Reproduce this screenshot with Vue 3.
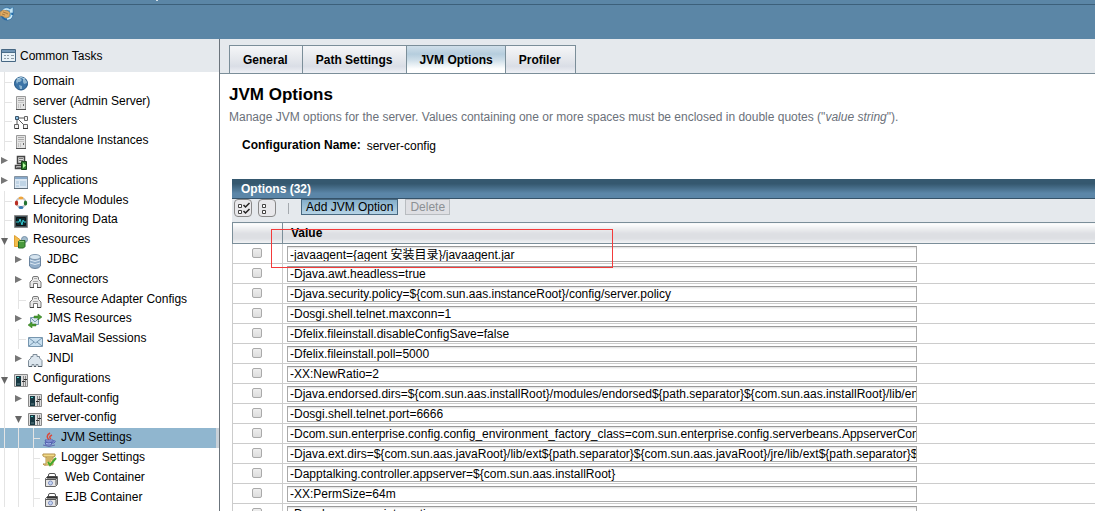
<script setup>
import { ref } from 'vue'

const tasks = [
  { label: 'Domain', icon: 'globe', level: 1, line: true },
  { label: 'server (Admin Server)', icon: 'server', level: 1, line: true },
  { label: 'Clusters', icon: 'cluster', level: 1, line: true },
  { label: 'Standalone Instances', icon: 'server', level: 1, line: true },
  { label: 'Nodes', icon: 'node', level: 1, arrow: 'closed' },
  { label: 'Applications', icon: 'apps', level: 1, arrow: 'closed' },
  { label: 'Lifecycle Modules', icon: 'lifecycle', level: 1, line: true },
  { label: 'Monitoring Data', icon: 'monitor', level: 1, line: true },
  { label: 'Resources', icon: 'resources', level: 1, arrow: 'open' },
  { label: 'JDBC', icon: 'database', level: 2, arrow: 'closed' },
  { label: 'Connectors', icon: 'connector', level: 2, arrow: 'closed' },
  { label: 'Resource Adapter Configs', icon: 'connector', level: 2, line: true },
  { label: 'JMS Resources', icon: 'jms', level: 2, arrow: 'closed' },
  { label: 'JavaMail Sessions', icon: 'mail', level: 2, line: true },
  { label: 'JNDI', icon: 'jndi', level: 2, arrow: 'closed' },
  { label: 'Configurations', icon: 'config', level: 1, arrow: 'open' },
  { label: 'default-config', icon: 'config', level: 2, arrow: 'closed' },
  { label: 'server-config', icon: 'config', level: 2, arrow: 'open' },
  { label: 'JVM Settings', icon: 'java', level: 3, line: true, selected: true },
  { label: 'Logger Settings', icon: 'logger', level: 3, line: true },
  { label: 'Web Container', icon: 'container', level: 3, line: true, wide: true },
  { label: 'EJB Container', icon: 'container', level: 3, line: true, wide: true },
]

const tabs = ['General', 'Path Settings', 'JVM Options', 'Profiler']
const activeTab = ref('JVM Options')

const options = ref([
  '-javaagent={agent 安装目录}/javaagent.jar',
  '-Djava.awt.headless=true',
  '-Djava.security.policy=${com.sun.aas.instanceRoot}/config/server.policy',
  '-Dosgi.shell.telnet.maxconn=1',
  '-Dfelix.fileinstall.disableConfigSave=false',
  '-Dfelix.fileinstall.poll=5000',
  '-XX:NewRatio=2',
  '-Djava.endorsed.dirs=${com.sun.aas.installRoot}/modules/endorsed${path.separator}${com.sun.aas.installRoot}/lib/endorsed',
  '-Dosgi.shell.telnet.port=6666',
  '-Dcom.sun.enterprise.config.config_environment_factory_class=com.sun.enterprise.config.serverbeans.AppserverConfigEnvironmentFactory',
  '-Djava.ext.dirs=${com.sun.aas.javaRoot}/lib/ext${path.separator}${com.sun.aas.javaRoot}/jre/lib/ext${path.separator}${com.sun.aas.instanceRoot}/lib/ext',
  '-Dapptalking.controller.appserver=${com.sun.aas.installRoot}',
  '-XX:PermSize=64m',
  '-Dgosh.args=--nointeractive',
])
</script>

<template>
  <div class="page">
    <header class="masthead">
      <div class="strip"><span class="mark"></span></div>
      <svg class="status" viewBox="0 0 14 14" aria-hidden="true">
        <circle cx="7" cy="7" r="5.500" fill="#6db4dd" stroke="#2468a6" stroke-width="2" />
        <path d="M2 3Q6-1 10 2L13 0V6H8L10 4Q6 2 3 5Z" fill="#c5e6f6" stroke="#2670ad" stroke-width=".5" />
        <path d="M0 5L3 3 8 4 10 6 9 10 6 11 2 9 0 9Z" fill="#dca963" stroke="#a4763d" stroke-width=".5" />
        <path d="M3 5L6 6 8 7M2 7L5 8" stroke="#8f6431" stroke-width=".7" fill="none" />
        <path d="M7 12Q11 12 12 8" stroke="#d1edf8" stroke-width="1.500" fill="none" />
      </svg>
    </header>

    <div class="body">
      <nav class="sidebar" aria-label="Common Tasks">
        <a class="common" href="#common">
          <svg viewBox="0 0 15 14" class="common-icon" aria-hidden="true">
            <path d="M.5.5h14v12H.5z" fill="#e8f2f7" stroke="#466783" />
            <path d="M1 1h13v3H1z" fill="#7095b5" />
            <path d="M1 3.500h13" stroke="#496d8a" />
            <path d="M3 6.500h2m1 0h2m2 0h3M3 9.500h2m1 0h2m2 0h3" stroke="#8c9aa5" />
          </svg>
          Common Tasks
        </a>
        <ul class="tree">
          <li
            v-for="(task, index) in tasks"
            :key="index"
            :class="['node', 'level-' + task.level, task.arrow, { selected: task.selected, line: task.line, wide: task.wide }]"
          >
            <span class="indent"></span>
            <span class="toggle">
              <svg v-if="task.arrow === 'closed'" viewBox="0 0 14 20" aria-hidden="true"><path d="M1 6V13L8 9.500Z" fill="#777" /></svg>
              <svg v-else-if="task.arrow === 'open'" viewBox="0 0 14 20" aria-hidden="true"><path d="M1 8H8L4.500 15Z" fill="#666" /></svg>
            </span>
            <a :href="'#' + task.icon">
              <svg class="icon" viewBox="0 0 15 15" aria-hidden="true">
                <g v-if="task.icon === 'globe'">
                  <circle cx="7" cy="7.500" r="6.500" fill="#3c74a7" stroke="#1e5383" />
                  <path d="M2 5Q3 2 6 2L8 4 6 6 4 6 3 8ZM9 2Q13 4 13 7L10 8 9 6ZM5 9L8 10 8 13 6 13Z" fill="#8fb6d1" />
                  <path d="M3 3Q7 0 11 3" stroke="#b8d8ea" fill="none" />
                </g>
                <g v-else-if="task.icon === 'server'">
                  <path d="M2.500.5h9v13h-9z" fill="#e4e4e4" stroke="#999" />
                  <path d="M4 2.500h6M4 4.500h6" stroke="#aaa" />
                  <path d="M4 6.500h6" stroke="#c6c6c6" />
                  <path d="M4.500 8v4M6.500 8v4" stroke="#c3c3c3" />
                  <path d="M9 8h1v2H9z" fill="#666" />
                  <path d="M2 13.500h10" stroke="#555" />
                </g>
                <g v-else-if="task.icon === 'cluster'">
                  <path d="M4 3h7M3 4v7M4 4l7 7" stroke="#555" />
                  <path d="M1.500 1.500h3v3h-3z" fill="#8cc0e4" stroke="#3c566b" />
                  <path d="M10.500 1.500h3v4h-3zM.5 9.500h4v4h-4zM9.500 9.500h4v4h-4z" fill="#f3f3f3" stroke="#666" />
                  <path d="M1 13.500h4M9 13.500h5" stroke="#333" />
                </g>
                <g v-else-if="task.icon === 'node'">
                  <path d="M3.500 1.500h7v7h-7zM1.500 10.500h8v3h-8z" fill="#ddd" stroke="#444" stroke-width="1.500" />
                  <path d="M5 3.500h4M5 5.500h4M3 12.500h5" stroke="#777" />
                  <path d="M7.500 6.500h5v8h-5z" fill="#2e7b2e" stroke="#173f17" />
                  <path d="M9 8v5l3-2.500Z" fill="#b9ffa2" />
                </g>
                <g v-else-if="task.icon === 'apps'">
                  <path d="M.5 1.500h13v12H.5z" fill="#dbe7f2" stroke="#8593a0" />
                  <path d="M1 2h12v2H1z" fill="#87a8c8" />
                  <path d="M2 6h3v3H2zm4 0h6v5H6zM2 10h3v2H2z" fill="#c0d4e5" />
                  <path d="M0 13.500h14" stroke="#5e6c79" />
                </g>
                <g v-else-if="task.icon === 'lifecycle'">
                  <circle cx="7" cy="7.500" r="4.500" fill="none" stroke="#c4c4c4" stroke-width="2" />
                  <ellipse cx="7" cy="3" rx="2.500" ry="1.500" fill="#efa43c" />
                  <ellipse cx="2.500" cy="8" rx="1.700" ry="2.500" fill="#b92d22" />
                  <ellipse cx="11.500" cy="8" rx="1.700" ry="2.500" fill="#237330" />
                  <ellipse cx="7" cy="12.500" rx="2.500" ry="1.500" fill="#3979b3" />
                </g>
                <g v-else-if="task.icon === 'monitor'">
                  <path d="M.5 1.500h13v12H.5z" fill="#44545a" stroke="#8b8b8b" />
                  <path d="M2.500 3.500h9v8h-9z" fill="#092a31" stroke="#111" />
                  <path d="M2 8h3l1-3 2 6 1-5 1 2h2" fill="none" stroke="#36c8ce" />
                </g>
                <g v-else-if="task.icon === 'resources'">
                  <path d="M.5 1.500L6.500 6V12.500H.5Z" fill="#f3bd4c" stroke="#dfa135" />
                  <circle cx="10.500" cy="5.500" r="3" fill="#a3bccd" stroke="#7691a9" />
                  <path d="M4.500 7.500L6 6.500h5v6l-1.500 1.500h-5z" fill="#4a9a3d" stroke="#286a29" />
                  <path d="M5 7.500h5" stroke="#8fcc78" />
                </g>
                <g v-else-if="task.icon === 'database'">
                  <path d="M1.500 3v9Q3 14.500 7 14.500T12.500 12V3" fill="#91adc9" stroke="#69839e" />
                  <ellipse cx="7" cy="3" rx="5.500" ry="2.500" fill="#d7e5f0" stroke="#849bb1" />
                  <path d="M2 6Q7 9 12 6M2 9Q7 12 12 9" fill="none" stroke="#dce8f3" />
                </g>
                <g v-else-if="task.icon === 'connector'">
                  <path d="M4.500 5.500V4Q4.500 2.500 6 2.500H9Q10.500 2.500 10.500 4V5.500L13 8V13.500H9.500V9.500H5.500V13.500H2V8Z" fill="#e8e8e8" stroke="#777" />
                  <path d="M6 4.500h3M5 7.500h5" stroke="#aaa" />
                  <path d="M2 13.500h4M9 13.500h4" stroke="#444" />
                </g>
                <g v-else-if="task.icon === 'jms'">
                  <path d="M2.500 4.500h8v7h-8z" fill="#d7e5ef" stroke="#7b9bb3" />
                  <path d="M3 5l4 4 4-4" fill="none" stroke="#7b9bb3" />
                  <path d="M6 3h4V1l4 3-4 3V5H6zM8 11H4V9l-4 3 4 3v-2h4z" fill="#4a9a32" stroke="#327821" stroke-width=".5" />
                </g>
                <g v-else-if="task.icon === 'mail'">
                  <path d="M.5 4.500h14v9H.5z" fill="#c8dfef" stroke="#7796af" />
                  <path d="M1 5l6.500 5L14 5M1 13l5-4m8 4L9 9" fill="none" stroke="#7796af" />
                </g>
                <g v-else-if="task.icon === 'jndi'">
                  <path d="M.5 13.500V7.500L3 5V3.500H5V1.500H9V3.500H11.500V5L14 7.500V13.500H10V11.500H8V13.500H6V11.500H4V13.500Z" fill="#dce6ee" stroke="#7f8d99" />
                  <path d="M1 13.500h3m2 0h2m2 0h4" stroke="#505c66" />
                </g>
                <g v-else-if="task.icon === 'config'">
                  <path d="M.5 1.500h13v12H.5z" fill="#ddd" stroke="#888" />
                  <path d="M2 3h5v10H2z" fill="#173842" />
                  <path d="M3 4h2v1H3z" fill="#54d0c8" />
                  <path d="M3 11h3" stroke="#67848b" />
                  <path d="M9.500 3v10M11.500 3v10" stroke="#888" />
                  <path d="M8 8.500h3M10 6.500h3" stroke="#333" />
                </g>
                <g v-else-if="task.icon === 'java'">
                  <path d="M8 1Q3 4 7 8M10 3Q6 5 9 7" stroke="#db4939" stroke-width="1.500" fill="none" />
                  <path d="M3 8h8v2H4zM3 10Q7 12 10 10L9 13H4ZM11 9q4-1 1 2h-2" fill="#a9b7ee" stroke="#5261ae" />
                  <path d="M1 13Q7 16 13 13" stroke="#6069b0" fill="none" />
                </g>
                <g v-else-if="task.icon === 'logger'">
                  <path d="M1 2Q0 5 4 5V12H1Q2 14 5 13H11V5Q14 5 13 2Z" fill="#f2da87" stroke="#b2904a" />
                  <path d="M4 5h7M5 7h5M5 9h4" stroke="#ad8c45" />
                  <path d="M6 10l2 3 6-7" fill="none" stroke="#44a72d" stroke-width="2" />
                </g>
                <g v-else>
                  <path d="M4.500 4V3Q4.500 1.500 6 1.500H10Q11.500 1.500 11.500 3V4" fill="none" stroke="#555" />
                  <path d="M1.500 6.500L3.500 4.500H13.500V12.500L11.500 14.500H1.500Z" fill="#e5e5e5" stroke="#666" />
                  <path d="M2 7.500h10v6M12 7l1-2" fill="none" stroke="#555" />
                  <path d="M3 5.500h10" stroke="#333" stroke-width="2" />
                  <circle cx="6.500" cy="11" r="2" fill="#c6d7f5" stroke="#8290c0" />
                </g>
              </svg>
              {{ task.label }}
            </a>
          </li>
        </ul>
      </nav>

      <main class="content">
        <div class="tabs" role="tablist">
          <button
            v-for="tab in tabs"
            :key="tab"
            type="button"
            role="tab"
            :aria-selected="tab === activeTab"
            :class="['tab', { active: tab === activeTab }]"
            @click="activeTab = tab"
          >{{ tab }}</button>
        </div>

        <h1>JVM Options</h1>
        <p class="help">Manage JVM options for the server. Values containing one or more spaces must be enclosed in double quotes ("<em>value string</em>").</p>
        <dl class="property"><dt>Configuration Name:</dt><dd>server-config</dd></dl>

        <section class="options">
          <h2>Options (32)</h2>
          <div class="actions">
            <button class="select-button" type="button" aria-label="Select all">
              <svg viewBox="0 0 16 16" aria-hidden="true">
                <path d="M3.500 4.500h3v3h-3zM3.500 10.500h3v3h-3z" fill="#fff" stroke="#444" />
                <path d="M8.500 5l2 2 4-4M8.500 11l2 2 4-4" fill="none" stroke="#222" stroke-width="1.500" />
              </svg>
            </button>
            <button class="select-button" type="button" aria-label="Deselect all">
              <svg viewBox="0 0 16 16" aria-hidden="true"><path d="M3.500 4.500h3v3h-3zM3.500 10.500h3v3h-3z" fill="#fff" stroke="#444" /></svg>
            </button>
            <span class="divider"></span>
            <button class="action primary" type="button">Add JVM Option</button>
            <button class="action" type="button" disabled>Delete</button>
          </div>
          <table>
            <thead><tr><th class="check"></th><th>Value</th></tr></thead>
            <tbody>
              <tr v-for="(option, index) in options" :key="index">
                <td class="check"><input type="checkbox" :aria-label="'Select option ' + (index + 1)" /></td>
                <td><input v-model="options[index]" class="value" type="text" :aria-label="'Value ' + (index + 1)" /></td>
              </tr>
            </tbody>
          </table>
          <div class="highlight"></div>
        </section>
      </main>
    </div>
  </div>
</template>

<style>
html, body { background: #fff; }
body { overflow: hidden; }
</style>

<style scoped>
* { box-sizing: border-box; }
.page {
  height: 100vh;
  display: flex;
  flex-direction: column;
  overflow: hidden;
  font: 12px/16px "Liberation Sans", Arial, "Noto Sans CJK SC", sans-serif;
  color: #000;
}
button, input { font: inherit; color: inherit; margin: 0; }
a { color: inherit; text-decoration: none; }
.masthead { flex: none; height: 39px; background: #5b86a6; }
.strip { height: 5px; padding-left: 156px; border-bottom: 1px solid #3c607a; }
.mark { display: block; width: 2px; height: 1px; background: #d5e1e9; }
.status { display: block; width: 14px; height: 14px; margin-top: 2px; }
.body { flex: 1; min-height: 0; display: flex; }
.sidebar { flex: none; width: 220px; border-right: 1px solid #6b747c; overflow: hidden; }
.common { display: flex; align-items: center; gap: 4px; height: 33px; padding-left: 1px; background: #e5e9ed; }
.common-icon { width: 15px; height: 14px; }
.tree { list-style: none; margin: 0; padding: 0; }
.node {
  display: flex;
  height: 20px;
  background: linear-gradient(#e4e4e4, #e4e4e4) 4px 0 / 1px 100% no-repeat;
}
.node:nth-child(5n + 2) { height: 19px; }
.level-1.closed { background: none; }
.level-2.line, .level-3 { background: linear-gradient(#e4e4e4, #e4e4e4) 4px 0 / 1px 100% no-repeat, linear-gradient(#e4e4e4, #e4e4e4) 18px 0 / 1px 100% no-repeat; }
.indent { flex: none; width: 0; }
.level-2 .indent { width: 14px; }
.level-3 .indent { width: 28px; }
.toggle { flex: none; width: 14px; }
.toggle svg { display: block; width: 14px; height: 20px; }
.level-3 .toggle { background: linear-gradient(#e4e4e4, #e4e4e4) 5px 0 / 1px 100% no-repeat; }
.line .toggle::before { content: ""; display: block; width: 7px; height: 1px; margin: 10px 0 0 5px; background: #e4e4e4; }
.node a { display: flex; gap: 4px; line-height: 18px; white-space: nowrap; }
.icon { width: 15px; height: 15px; margin-top: 4px; }
.wide a { gap: 6px; padding-left: 2px; }
.selected { background-color: #90b6cf; box-shadow: inset -3px 0 #c9d1d8; }
.content { flex: 1; min-width: 0; }
.tabs { display: flex; height: 35px; padding: 6px 0 0 9px; background: #e5e9ed; border-bottom: 1px solid #7b8e99; }
.tab {
  height: 28px;
  padding: 0 14px 0 13px;
  border: 1px solid #7b8e99;
  border-width: 1px 0 0 1px;
  background: linear-gradient(#f5f6f8, #e4e7ec 50%, #dadee6 75%, #eef0f5);
  font-weight: bold;
}
.tab:last-child { border-right-width: 1px; }
.tab.active { padding: 0 12px; background: linear-gradient(#d0dfe9, #b5cddd 30%, #cbdce7 50%, #fff 85%); }
h1 { margin: 10px 9px 0; font-size: 17px; line-height: 22px; }
.help { margin: 3px 9px 0; color: #6b717a; white-space: nowrap; }
.property { display: flex; gap: 6px; margin: 12px 22px 0; }
.property dt { font-weight: bold; }
.property dd { margin: 1px 0 0; }
.options { position: relative; margin: 25px 0 0 12px; }
h2 {
  height: 20px;
  margin: 0;
  padding-left: 9px;
  border-bottom: 1px solid #355269;
  background: linear-gradient(#35586f 25%, #5b86a8 75%);
  color: #fff;
  font-size: 12px;
  line-height: 20px;
}
.actions { display: flex; height: 23px; padding-left: 2px; background: #e5e9ed; }
.select-button { width: 18px; height: 18px; margin-right: 6px; padding: 0; border: 1px solid #888; border-radius: 4px; background: #e8e8eb; }
.select-button svg { display: block; width: 16px; height: 16px; }
.divider { width: 1px; height: 11px; margin: 4px 12px 0 6px; background: #a4a9ae; }
.action { height: 16px; padding: 0 4px; border: 1px solid #b8bcc0; background: #dedfe3; color: #8c9094; line-height: 14px; }
.action.primary { margin-right: 7px; border-color: #496981; background: linear-gradient(#83adc9, #b6d4e6); color: #000; }
table { width: 100%; border-collapse: collapse; table-layout: fixed; }
th { height: 21px; padding: 0 8px; border: 1px solid #7b8e99; border-right: 0; background: linear-gradient(#fff, #dddfe3 50%, #dddfe3 75%, #f3f4f6); text-align: left; line-height: 19px; }
td { height: 20px; padding: 0 4px; border: 1px solid #ccc; border-right: 0; line-height: 0; }
.check { width: 50px; text-align: center; }
td.check { padding: 0 6px 2px 4px; }
input[type="checkbox"] { appearance: none; width: 10px; height: 10px; border: 1px solid #aaa; border-radius: 2px; background: linear-gradient(#eee, #ddd); }
.value { display: block; width: 630px; max-width: 100%; height: 16px; padding: 0 0 0 2px; border: 1px solid #aaa; border-top-color: #999; border-radius: 0; background: linear-gradient(#ddd, #fff 2px); line-height: 14px; outline: 0; }
.highlight { position: absolute; left: 39px; top: 50px; width: 342px; height: 39px; border: 1px solid #f33b3b; pointer-events: none; }
</style>
